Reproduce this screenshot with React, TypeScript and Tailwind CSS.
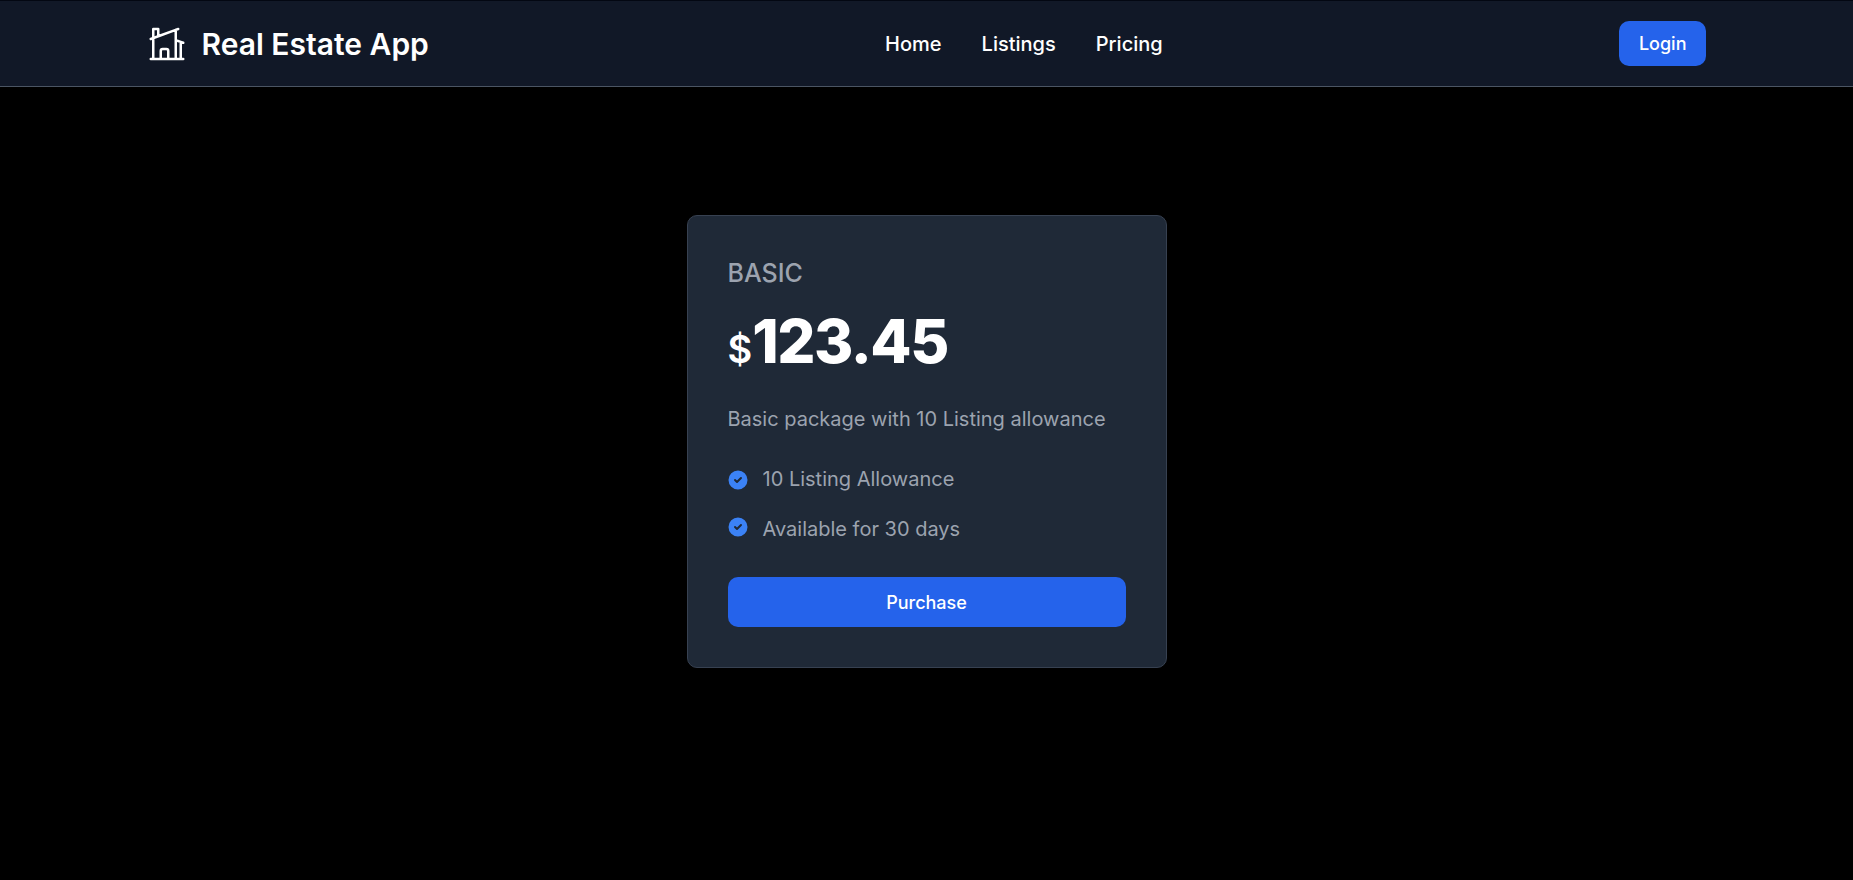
const links = ["Home", "Listings", "Pricing"];

const features = [
  { label: "10 Listing Allowance", align: "items-center" },
  { label: "Available for 30 days", align: "items-start" },
];

function HomeIcon() {
  return (
    <svg className="size-10" viewBox="0 0 24 24" fill="none" stroke="currentColor" strokeWidth="1.5" aria-hidden="true">
      <path
        strokeLinecap="round"
        strokeLinejoin="round"
        d="M8.25 21v-4.875c0-.621.504-1.125 1.125-1.125h2.25c.621 0 1.125.504 1.125 1.125V21m0 0h4.5V3.545M12.75 21h7.5V10.75M2.25 21h1.5m18 0h-18M2.25 9l4.5-1.636M18.75 3l-1.5.545m0 6.205 3 1m1.5.5-1.5-.5M6.75 7.364V3h-3v18m3-13.636 10.5-3.819"
      />
    </svg>
  );
}

function CheckIcon() {
  return (
    <svg className="size-5 shrink-0 text-[#3b82f6]" viewBox="0 0 20 20" fill="currentColor" aria-hidden="true">
      <path d="M10 .5a9.5 9.5 0 1 0 9.5 9.5A9.51 9.51 0 0 0 10 .5Zm3.707 8.207-4 4a1 1 0 0 1-1.414 0l-2-2a1 1 0 0 1 1.414-1.414L9 10.586l3.293-3.293a1 1 0 0 1 1.414 1.414Z" />
    </svg>
  );
}

export default function App() {
  return (
    <div className="min-h-screen bg-black font-['Inter',sans-serif] text-white [font-optical-sizing:none]">
      <header className="border-t border-b border-t-[#030712] border-b-[#4b5563] bg-[#111827]">
        <div className="mx-auto flex max-w-[1600px] items-center justify-between p-5">
          <a href="#" className="flex items-center gap-[15px]">
            <HomeIcon />
            <span className="text-[30px] leading-10 font-semibold whitespace-nowrap">Real Estate App</span>
          </a>
          <nav>
            <ul className="flex gap-10 text-xl leading-[30px] font-medium">
              {links.map((link) => (
                <li key={link}>
                  <a href="#">{link}</a>
                </li>
              ))}
            </ul>
          </nav>
          <button type="button" className="h-[45px] rounded-[10px] bg-[#2563eb] px-5 text-lg leading-[25px] font-medium">
            Login
          </button>
        </div>
      </header>

      <main className="flex justify-center px-5 pt-32">
        <section className="w-full max-w-[480px] rounded-[10px] border border-[#374151] bg-[#1f2937] p-10">
          <h2 className="mb-5 text-[25px] leading-[35px] font-medium text-[#9ca3af]">BASIC</h2>
          <div className="flex items-baseline">
            <span className="text-[38px] leading-[45px] font-semibold">$</span>
            <span className="text-[60px] leading-[60px] font-extrabold tracking-tight">123.45</span>
          </div>
          <p className="mt-[35px] text-xl leading-[25px] text-[#9ca3af]">Basic package with 10 Listing allowance</p>
          <ul className="my-[35px] flex flex-col gap-[25px]">
            {features.map(({ label, align }) => (
              <li key={label} className={`flex gap-[15px] ${align}`}>
                <CheckIcon />
                <span className="text-xl leading-[25px] text-[#9ca3af]">{label}</span>
              </li>
            ))}
          </ul>
          <button type="button" className="h-[50px] w-full rounded-[10px] bg-[#2563eb] text-lg leading-[25px] font-medium">
            Purchase
          </button>
        </section>
      </main>
    </div>
  );
}
